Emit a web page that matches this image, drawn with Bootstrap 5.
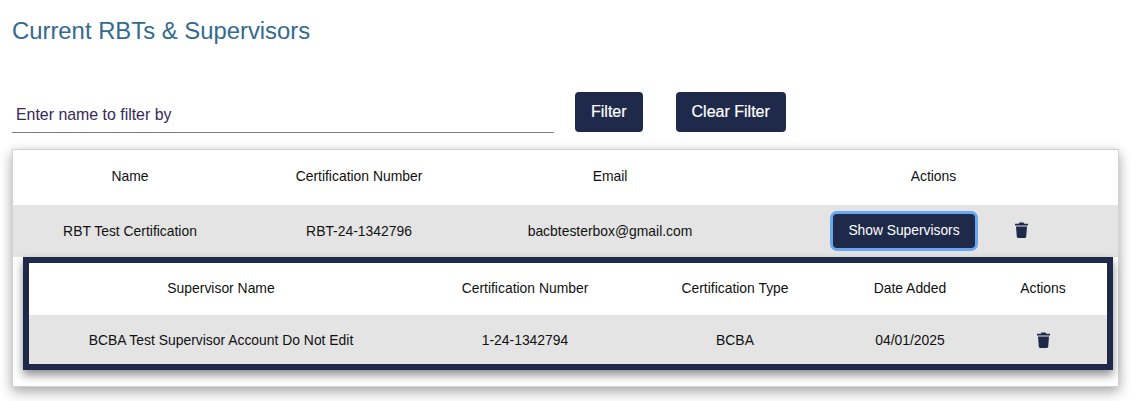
<!DOCTYPE html>
<html lang="en">
<head>
<meta charset="utf-8">
<title>Current RBTs &amp; Supervisors</title>
<link rel="stylesheet" href="https://cdn.jsdelivr.net/npm/bootstrap@5.3.0/dist/css/bootstrap.min.css">
<style>
html,body{height:401px;overflow:hidden;background:#fff;}
body{font-family:"Liberation Sans",Arial,sans-serif;font-size:14px;color:#111;}
.pg{padding:16px 23px 0 12px;}
.ttl{font-size:23.85px;line-height:30px;font-weight:400;color:#336a8e;margin:0 0 46px;}
.flt{height:40px;}
.flt-in{width:542px;height:41px;padding:11px 4px 6px;border:0;border-bottom:1px solid #7d7d7d;border-radius:0;font-size:15.9px;line-height:24px;box-shadow:none;}
.flt-in::placeholder{color:#342a58;opacity:1;}
.btn-nv{background:#1f2a4a;border:0;color:#fff;border-radius:4px;font-size:16px;font-weight:500;height:40px;padding:0 16px;-webkit-text-stroke:.2px #fff;}
.btn-nv:hover{background:#1f2a4a;color:#fff;}
.ms-a{margin-left:21px;}
.ms-b{margin-left:33px;}
.pnl{margin-top:17px;margin-right:-1px;background:#fff;border:1px solid #d2d2d2;box-shadow:0 5px 12px rgba(0,0,0,.32),0 0 10px rgba(0,0,0,.06);height:238px;}
.tb{margin:0;table-layout:fixed;width:100%;--bs-table-bg:transparent;}
.tb th,.tb td{font-weight:400;text-align:center;vertical-align:middle;padding:0;border:0;color:#111;font-size:13.9px;}
.tb .hd{height:55px;}
.tb .hd th{padding-bottom:3px;}
.tb .gr>td{background:#e4e4e4;height:52px;}
.btn-sm-nv{font-size:13.8px;font-weight:400;height:34px;width:142px;padding:1px 0 0;-webkit-text-stroke:0;box-shadow:0 0 0 3px #69a8f0;border-radius:4px;margin-bottom:1px;}
.cellflex{padding-left:84px;}
.trash{display:block;width:13px;height:16px;margin-left:40px;margin-bottom:2px;}
.subwrap{margin:0 5px 0 10px;border:6px solid #1f2a4a;box-shadow:0 5px 9px rgba(0,0,0,.45);}
.subwrap .hd{height:52px;border-bottom:1px solid #dee2e6;}
.subwrap .gr>td{height:49px;}
.subwrap .gr>td.txt{padding-top:2px;}
.subwrap .hd th{padding-bottom:0;}
.pad-r{padding-right:8px !important;}
.trash2{display:inline-block;vertical-align:middle;width:13px;height:16px;margin-bottom:2px;}
</style>
</head>
<body>
<main class="pg">
<h1 class="ttl">Current RBTs &amp; Supervisors</h1>
<div class="d-flex align-items-start flt">
<input type="text" class="form-control flt-in" placeholder="Enter name to filter by">
<button type="button" class="btn btn-nv ms-a">Filter</button>
<button type="button" class="btn btn-nv ms-b">Clear Filter</button>
</div>
<div class="pnl">
<table class="table tb">
<colgroup><col style="width:234px"><col style="width:224px"><col style="width:278px"><col></colgroup>
<thead><tr class="hd"><th>Name</th><th>Certification Number</th><th>Email</th><th>Actions</th></tr></thead>
<tbody><tr class="gr"><td>RBT Test Certification</td><td>RBT-24-1342796</td><td>bacbtesterbox@gmail.com</td>
<td><div class="d-flex align-items-center cellflex"><button type="button" class="btn btn-nv btn-sm-nv">Show Supervisors</button>
<svg class="trash" viewBox="0 0 13 16" aria-hidden="true"><path fill="#1f2a4a" d="M4.4 0.6h4.2l.6 1.2H13v1.6H0V1.8h3.8zM1 4.4h11l-.8 10.4c-.1.7-.5 1.1-1.2 1.1H3c-.7 0-1.1-.4-1.2-1.1z"/></svg></div></td></tr></tbody>
</table>
<div class="subwrap">
<table class="table tb">
<colgroup><col style="width:392px"><col style="width:208px"><col style="width:212px"><col style="width:138px"><col></colgroup>
<thead><tr class="hd"><th class="pad-r">Supervisor Name</th><th>Certification Number</th><th>Certification Type</th><th>Date Added</th><th>Actions</th></tr></thead>
<tbody><tr class="gr"><td class="pad-r txt">BCBA Test Supervisor Account Do Not Edit</td><td class="txt">1-24-1342794</td><td class="txt">BCBA</td><td class="txt">04/01/2025</td>
<td><svg class="trash2" viewBox="0 0 13 16" aria-hidden="true"><path fill="#1f2a4a" d="M4.4 0.6h4.2l.6 1.2H13v1.6H0V1.8h3.8zM1 4.4h11l-.8 10.4c-.1.7-.5 1.1-1.2 1.1H3c-.7 0-1.1-.4-1.2-1.1z"/></svg></td></tr></tbody>
</table>
</div>
</div>
</main>
<script src="https://cdn.jsdelivr.net/npm/bootstrap@5.3.0/dist/js/bootstrap.bundle.min.js"></script>
</body>
</html>
